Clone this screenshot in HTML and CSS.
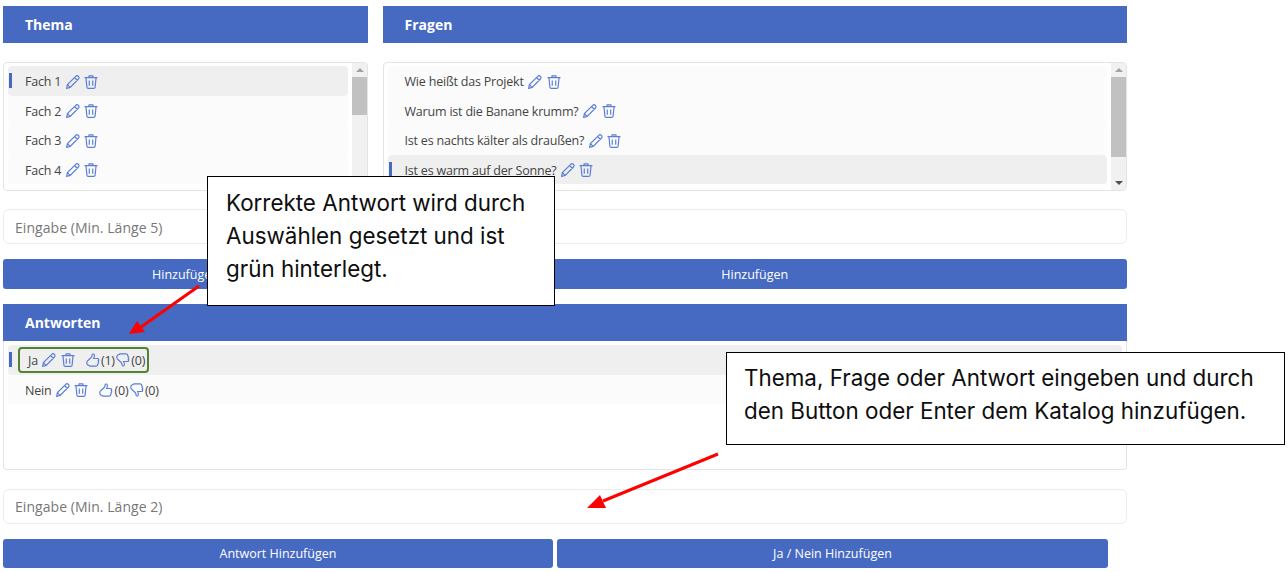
FILE: index.html
```html
<!DOCTYPE html>
<html lang="de">
<head>
    <meta charset="UTF-8">
    <title>Katalog</title>
    <link rel="stylesheet" href="styles.css">
</head>
<body>
    <svg class="defs" width="0" height="0">
        <symbol id="pencil" viewBox="0.6 0.6 12.8 12.8">
            <path d="M1.2 12.8l.7-3.4 7.6-7.6c.7-.7 1.600-.7 2.200-.1l.4.4c.6.6.6 1.500-.1 2.200l-7.600 7.600z M1.900 9.400l2.700 2.700 M8.400 2.900l2.700 2.700"/>
        </symbol>
        <symbol id="trash" viewBox="0.5 0.5 13 13">
            <path d="M1 3h12 M4.800 3l.5-1.700h3.400L9.200 3 M2.300 3l.9 8.800c.1.700.5 1.100 1.200 1.100h5.200c.7 0 1.100-.4 1.200-1.100l.9-8.800 M5.400 5.500v5 M8.600 5.500v5"/>
        </symbol>
        <symbol id="thumb-up" viewBox="0.5 0.5 13 13">
            <path d="M1.200 9.300c0-1.100.8-1.700 1.600-2.300l2.500-2.300c.6-.6.8-1.500.9-2.600.1-.9 1.700-1 2 .2.300 1.100-.1 2.300-.6 3.300h3.500c1.200 0 1.500 1.300.8 1.900.6.500.5 1.500-.1 1.900.3.700.1 1.400-.5 1.700.1 1-.5 1.600-1.500 1.600H4.600c-.8 0-1.300-.4-1.700-.8L1.900 11.500c-.5-.6-.7-1.300-.7-2.200z"/>
        </symbol>
        <symbol id="thumb-down" viewBox="0.5 0.5 13 13">
            <g transform="matrix(1 0 0 -1 0 14)">
                <path d="M1.200 9.300c0-1.100.8-1.700 1.600-2.300l2.500-2.300c.6-.6.8-1.500.9-2.600.1-.9 1.700-1 2 .2.300 1.100-.1 2.300-.6 3.300h3.500c1.200 0 1.500 1.300.8 1.900.6.500.5 1.500-.1 1.900.3.700.1 1.400-.5 1.700.1 1-.5 1.600-1.500 1.600H4.600c-.8 0-1.300-.4-1.700-.8L1.900 11.500c-.5-.6-.7-1.300-.7-2.200z"/>
            </g>
        </symbol>
    </svg>

    <div class="page">
        <div class="columns">
            <section class="col">
                <h2 class="heading">Thema</h2>
                <div class="list list-scroll">
                    <div class="rows">
                        <div class="row selected"><span>Fach 1</span><svg class="icon"><use href="#pencil"/></svg><svg class="icon"><use href="#trash"/></svg></div>
                        <div class="row"><span>Fach 2</span><svg class="icon"><use href="#pencil"/></svg><svg class="icon"><use href="#trash"/></svg></div>
                        <div class="row"><span>Fach 3</span><svg class="icon"><use href="#pencil"/></svg><svg class="icon"><use href="#trash"/></svg></div>
                        <div class="row"><span>Fach 4</span><svg class="icon"><use href="#pencil"/></svg><svg class="icon"><use href="#trash"/></svg></div>
                    </div>
                    <div class="scrollbar">
                        <span class="arrow-up"></span>
                        <span class="track"><span class="thumb thumb-short"></span></span>
                        <span class="arrow-down"></span>
                    </div>
                </div>
                <input class="field field-top" placeholder="Eingabe (Min. Länge 5)">
                <button class="btn">Hinzufügen</button>
            </section>

            <section class="col">
                <h2 class="heading">Fragen</h2>
                <div class="list list-scroll">
                    <div class="rows">
                        <div class="row"><span>Wie heißt das Projekt</span><svg class="icon"><use href="#pencil"/></svg><svg class="icon"><use href="#trash"/></svg></div>
                        <div class="row"><span>Warum ist die Banane krumm?</span><svg class="icon"><use href="#pencil"/></svg><svg class="icon"><use href="#trash"/></svg></div>
                        <div class="row"><span>Ist es nachts kälter als draußen?</span><svg class="icon"><use href="#pencil"/></svg><svg class="icon"><use href="#trash"/></svg></div>
                        <div class="row selected"><span>Ist es warm auf der Sonne?</span><svg class="icon"><use href="#pencil"/></svg><svg class="icon"><use href="#trash"/></svg></div>
                    </div>
                    <div class="scrollbar">
                        <span class="arrow-up"></span>
                        <span class="track"><span class="thumb thumb-long"></span></span>
                        <span class="arrow-down"></span>
                    </div>
                </div>
                <input class="field field-top" placeholder="">
                <button class="btn">Hinzufügen</button>
            </section>
        </div>

        <section class="answers">
            <h2 class="heading">Antworten</h2>
            <div class="list list-answers">
                <div class="rows">
                    <div class="row selected">
                        <div class="correct">
                            <span>Ja</span><svg class="icon"><use href="#pencil"/></svg><svg class="icon"><use href="#trash"/></svg>
                            <svg class="icon vote-up"><use href="#thumb-up"/></svg><span class="count">(1)</span><svg class="icon vote-down"><use href="#thumb-down"/></svg><span class="count">(0)</span>
                        </div>
                    </div>
                    <div class="row">
                        <span>Nein</span><svg class="icon"><use href="#pencil"/></svg><svg class="icon"><use href="#trash"/></svg>
                        <svg class="icon vote-up"><use href="#thumb-up"/></svg><span class="count">(0)</span><svg class="icon vote-down"><use href="#thumb-down"/></svg><span class="count">(0)</span>
                    </div>
                </div>
            </div>
            <input class="field field-answer" placeholder="Eingabe (Min. Länge 2)">
            <div class="actions">
                <button class="btn">Antwort Hinzufügen</button>
                <button class="btn">Ja / Nein Hinzufügen</button>
            </div>
        </section>
    </div>

    <div class="callout callout-correct">Korrekte Antwort wird durch Auswählen gesetzt und ist grün hinterlegt.</div>
    <div class="callout callout-enter">Thema, Frage oder Antwort eingeben und durch<br>den Button oder Enter dem Katalog hinzufügen.</div>

    <svg class="arrows" width="1288" height="572">
        <path d="M199 286L141 327" />
        <polygon points="129,334 137,321 145,332"/>
        <path d="M718 454L603 501" />
        <polygon points="587,508 600,495 606,508"/>
    </svg>
</body>
</html>
```

FILE: styles.css
```css
body {
    margin: 0;
    background-color: #ffffff;
    color: #444444;
    font-family: "Open Sans", sans-serif;
    font-size: 12.5px;
}

.defs {
    position: absolute;
}

.page {
    width: 1124px;
    padding: 6px 0 0 3px;
}

.columns {
    display: grid;
    grid-template-columns: 365px 744.5px;
    column-gap: 14.5px;
}

.col {
    display: flex;
    flex-direction: column;
}

.heading {
    height: 37px;
    margin: 0;
    padding-left: 22px;
    background-color: #4669c1;
    color: #ffffff;
    font-size: 14px;
    font-weight: 700;
    line-height: 37px;
}

.list {
    box-sizing: border-box;
    display: flex;
    height: 129px;
    border: 1px solid #e4e4e4;
    border-radius: 4px;
    overflow: hidden;
}

.list-scroll {
    margin-top: 19px;
}

.list-answers {
    border-top: none;
    border-radius: 0 0 4px 4px;
}

.rows {
    flex: 1;
    min-width: 0;
    padding: 3px 4px 0;
}

.list-answers .rows {
    padding-top: 4px;
}

.row {
    position: relative;
    box-sizing: border-box;
    display: flex;
    align-items: center;
    height: 29.5px;
    padding: 2px 0 0 17px;
    border-radius: 4px;
    background-color: #fbfbfb;
    letter-spacing: -0.2px;
}

.row.selected {
    background-color: #efefef;
}

.row.selected::before {
    content: "";
    position: absolute;
    left: 1px;
    top: 7px;
    width: 3px;
    height: 15px;
    background-color: #4669c1;
}

.icon {
    width: 14px;
    height: 14px;
    margin-left: 4.5px;
    flex: none;
    fill: none;
    stroke: #5b7fd6;
    stroke-width: 1.1;
}

.icon.vote-up {
    margin-left: 11px;
}

.icon.vote-down {
    margin-left: 1.5px;
}

.count {
    margin-left: 1px;
}

.correct {
    display: flex;
    align-items: center;
    box-sizing: border-box;
    height: 26px;
    margin: -1px 0 0 -7px;
    padding: 0 2px 0 8px;
    border: 2px solid #548235;
    border-radius: 4px;
}

.scrollbar {
    display: flex;
    flex-direction: column;
    align-items: center;
    width: 15px;
    background-color: #f1f1f1;
}

.track {
    flex: 1;
    width: 100%;
}

.thumb {
    display: block;
    background-color: #c1c1c1;
}

.thumb-short {
    height: 38px;
}

.thumb-long {
    height: 80px;
}

.arrow-up,
.arrow-down {
    display: block;
    flex: none;
    width: 0;
    height: 0;
    margin: 5px 0;
    border-left: 4px solid transparent;
    border-right: 4px solid transparent;
}

.arrow-up {
    border-bottom: 4px solid #a3a3a3;
}

.arrow-down {
    border-top: 4px solid #505050;
}

.field {
    box-sizing: border-box;
    display: block;
    width: 100%;
    height: 35px;
    margin-top: 18px;
    padding: 0 11px;
    border: 1px solid #ececec;
    border-radius: 6px;
    background-color: #ffffff;
    font-family: inherit;
    font-size: 14px;
    letter-spacing: 0.05px;
}

.field::placeholder {
    color: #777777;
}

.field-top {
    padding-top: 1px;
}

.field-answer {
    margin-top: 19px;
}

.btn {
    display: block;
    width: 100%;
    height: 30px;
    margin-top: 15px;
    padding: 0;
    border: none;
    border-radius: 3px;
    background-color: #4669c1;
    color: #ffffff;
    font-family: inherit;
    font-size: 12.5px;
}

.answers {
    margin-top: 15px;
}

.actions {
    display: grid;
    grid-template-columns: 550px 551px;
    column-gap: 4px;
}

.actions .btn {
    height: 29px;
}

.callout {
    position: absolute;
    box-sizing: border-box;
    border: 1.5px solid #000000;
    background-color: #ffffff;
    color: #0e0e0e;
    font-family: "Inter", sans-serif;
    font-size: 22.4px;
    line-height: 33px;
}

.callout-correct {
    left: 207px;
    top: 176px;
    width: 348px;
    height: 130px;
    padding: 9px 18px;
}

.callout-enter {
    left: 726px;
    top: 352px;
    width: 559px;
    height: 93px;
    padding: 8px 17px;
    white-space: nowrap;
}

.arrows {
    position: absolute;
    left: 0;
    top: 0;
    pointer-events: none;
}

.arrows path {
    fill: none;
    stroke: #fe0000;
    stroke-width: 3;
}

.arrows polygon {
    fill: #fe0000;
}
```
